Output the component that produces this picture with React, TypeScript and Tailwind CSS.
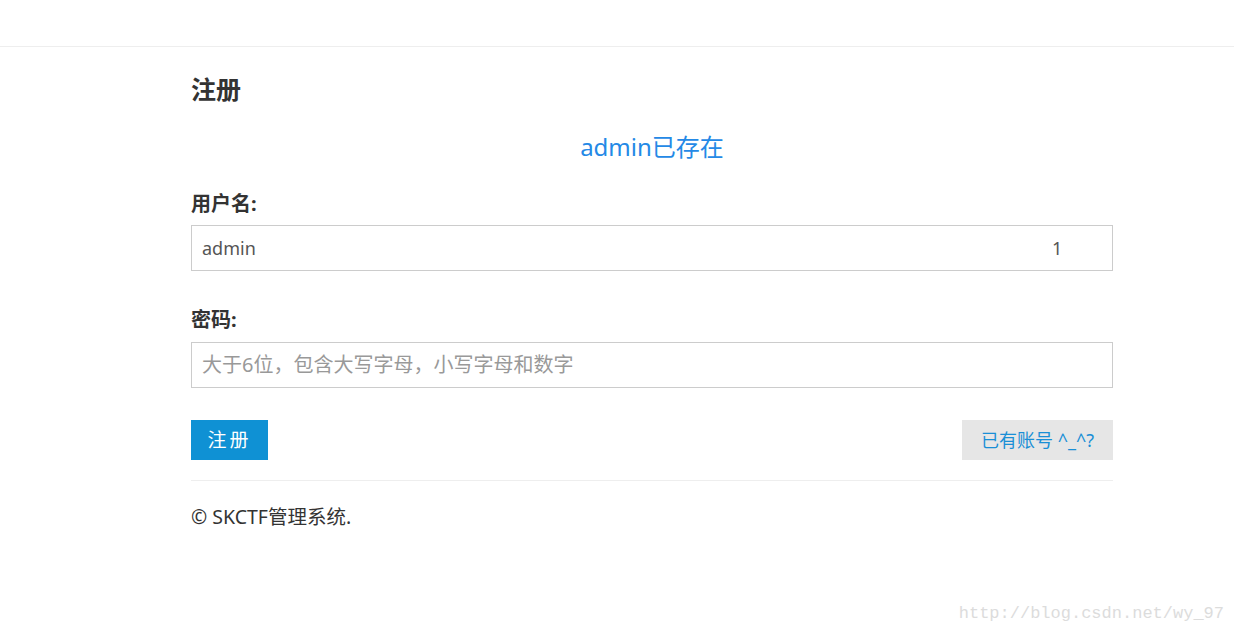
export default function App() {
  return (
    <div className="relative min-h-[634px] bg-white font-['Noto_Sans','Noto_Sans_CJK_SC',sans-serif] text-[#333]">
      <header className="h-[47px] border-b border-[#eeeeee]" />

      <main className="ml-[191px] w-[922px] pt-[24px]">
        <h2 className="text-[25px] font-bold leading-[36px]">注册</h2>

        <p className="mt-[22px] text-center text-[24px] leading-[36px] text-[#2489e6]">admin已存在</p>

        <form className="mt-[25px]">
          <label className="block text-[20px] font-bold leading-[28px]">用户名:</label>
          <div className="relative mt-[7px]">
            <input
              defaultValue="admin"
              className="h-[46px] w-full border border-[#cccccc] px-[10px] text-[18px] text-[#555] outline-none"
            />
            <span className="absolute left-[861px] top-[10px] text-[18px] leading-[26px] text-[#555]">1</span>
          </div>

          <label className="mt-[35px] block text-[20px] font-bold leading-[28px]">密码:</label>
          <input
            type="password"
            placeholder="大于6位，包含大写字母，小写字母和数字"
            className="mt-[8px] h-[46px] w-full border border-[#cccccc] px-[10px] text-[18px] text-[#555] outline-none placeholder:text-[20px] placeholder:text-[#999]"
          />

          <div className="mt-[32px] flex items-center justify-between">
            <button
              type="button"
              className="h-[40px] w-[77px] bg-[#0f91d4] text-[19px] tracking-[3px] text-white"
            >
              注册
            </button>
            <button
              type="button"
              className="h-[40px] w-[151px] bg-[#e6e6e6] text-[18px] text-[#1a8fd6]"
            >
              已有账号 ^_^?
            </button>
          </div>
        </form>

        <div className="mt-[20px] border-t border-[#eeeeee] pt-[22px]">
          <p className="text-[19.5px] leading-[28px] text-[#333]">© SKCTF管理系统.</p>
        </div>
      </main>

      <div className="absolute bottom-[8px] right-[10px] font-['Liberation_Mono',monospace] text-[17px] text-[#dcdcdc]">
        http://blog.csdn.net/wy_97
      </div>
    </div>
  );
}
